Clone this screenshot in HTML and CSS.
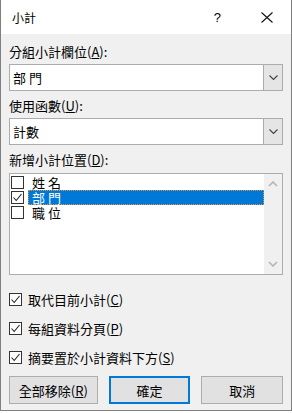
FILE: index.html
```html
<!DOCTYPE html>
<html lang="zh-Hant">
<head>
    <meta charset="UTF-8">
    <meta name="viewport" content="width=device-width, initial-scale=1.0">
    <title>小計</title>
    <link rel="stylesheet" href="styles.css">
</head>
<body>
    <div class="dialog">
        <div class="titlebar">
            <span class="title">小計</span>
            <span class="help">?</span>
            <svg class="close" width="12" height="11" viewBox="0 0 12 11">
                <path d="M0.5 0.5 L11.5 10.5 M11.5 0.5 L0.5 10.5" stroke="#111" stroke-width="1.1" fill="none"/>
            </svg>
        </div>

        <div class="content">
            <label class="field-label">分組小計欄位(<u>A</u>):</label>
            <div class="combo">
                <span class="combo-value">部 門</span>
                <span class="combo-btn">
                    <svg width="9" height="5" viewBox="0 0 9 5"><path d="M0.5 0.5 L4.5 4.5 L8.5 0.5" stroke="#444" stroke-width="1.1" fill="none"/></svg>
                </span>
            </div>

            <label class="field-label">使用函數(<u>U</u>):</label>
            <div class="combo">
                <span class="combo-value">計數</span>
                <span class="combo-btn">
                    <svg width="9" height="5" viewBox="0 0 9 5"><path d="M0.5 0.5 L4.5 4.5 L8.5 0.5" stroke="#444" stroke-width="1.1" fill="none"/></svg>
                </span>
            </div>

            <label class="field-label">新增小計位置(<u>D</u>):</label>
            <div class="listbox">
                <div class="list-items">
                    <div class="list-row">
                        <span class="box"></span>
                        <span class="row-text">姓 名</span>
                    </div>
                    <div class="list-row">
                        <span class="box">
                            <svg width="11" height="11" viewBox="0 0 11 11"><path d="M1.5 5.5 L4.2 8.5 L9.5 2" stroke="#222" stroke-width="1.1" fill="none"/></svg>
                        </span>
                        <span class="row-text selected">部 門</span>
                    </div>
                    <div class="list-row">
                        <span class="box"></span>
                        <span class="row-text">職 位</span>
                    </div>
                </div>
                <div class="scrollbar">
                    <svg width="10" height="6" viewBox="0 0 10 6"><path d="M1 5 L5 1 L9 5" stroke="#b4b4b4" stroke-width="1.6" fill="none"/></svg>
                    <svg width="10" height="6" viewBox="0 0 10 6"><path d="M1 1 L5 5 L9 1" stroke="#b4b4b4" stroke-width="1.6" fill="none"/></svg>
                </div>
            </div>

            <div class="options">
                <div class="option">
                    <span class="box">
                        <svg width="11" height="11" viewBox="0 0 11 11"><path d="M1.5 5.5 L4.2 8.5 L9.5 2" stroke="#222" stroke-width="1.1" fill="none"/></svg>
                    </span>
                    <span>取代目前小計(<u>C</u>)</span>
                </div>
                <div class="option">
                    <span class="box">
                        <svg width="11" height="11" viewBox="0 0 11 11"><path d="M1.5 5.5 L4.2 8.5 L9.5 2" stroke="#222" stroke-width="1.1" fill="none"/></svg>
                    </span>
                    <span>每組資料分頁(<u>P</u>)</span>
                </div>
                <div class="option">
                    <span class="box">
                        <svg width="11" height="11" viewBox="0 0 11 11"><path d="M1.5 5.5 L4.2 8.5 L9.5 2" stroke="#222" stroke-width="1.1" fill="none"/></svg>
                    </span>
                    <span>摘要置於小計資料下方(<u>S</u>)</span>
                </div>
            </div>

            <div class="buttons">
                <button class="btn btn-wide">全部移除(<u>R</u>)</button>
                <button class="btn btn-default">確定</button>
                <button class="btn">取消</button>
            </div>
        </div>
    </div>
</body>
</html>
```

FILE: styles.css
```css
html, body {
    margin: 0;
    padding: 0;
    background: #ffffff;
}
body {
    font-family: "Noto Sans CJK TC", "Noto Sans", sans-serif;
    font-size: 13px;
    color: #000;
}
.dialog {
    width: 292px;
    height: 411px;
    box-sizing: border-box;
    border: 1px solid #7f7f7f;
    border-top: none;
    background: #f0f0f0;
    display: flex;
    flex-direction: column;
}
.titlebar {
    height: 34px;
    background: #ffffff;
    display: flex;
    align-items: center;
    padding-left: 11px;
}
.title {
    font-size: 12px;
    flex: 1;
}
.help {
    font-family: "Liberation Sans", sans-serif;
    font-size: 13px;
    margin-right: 40px;
}
.close {
    margin-right: 18px;
}
.content {
    padding: 9px 8px 0 8px;
    display: flex;
    flex-direction: column;
}
.field-label {
    display: block;
    height: 18px;
    line-height: 18px;
    margin-bottom: 3px;
}
.combo {
    height: 27px;
    box-sizing: border-box;
    border: 1px solid #acacac;
    background: #fff;
    display: flex;
    margin-bottom: 6px;
}
.combo-value {
    flex: 1;
    line-height: 25px;
    padding-left: 3px;
}
.combo-btn {
    width: 18px;
    background: #e5e5e5;
    border-left: 1px solid #acacac;
    display: flex;
    align-items: center;
    justify-content: center;
}
.listbox {
    margin-top: 1px;
    height: 102px;
    box-sizing: border-box;
    border: 1px solid #adadad;
    background: #fff;
    display: flex;
}
.list-items {
    flex: 1;
    padding: 1px 0 0 1px;
}
.list-row {
    height: 15px;
    display: flex;
    align-items: center;
}
.box {
    width: 13px;
    height: 13px;
    box-sizing: border-box;
    border: 1px solid #333;
    background: #fff;
    display: flex;
    align-items: center;
    justify-content: center;
    flex-shrink: 0;
}
.row-text {
    flex: 1;
    height: 15px;
    line-height: 15px;
    padding-left: 4px;
    margin-left: 4px;
    box-sizing: border-box;
}
.row-text.selected {
    background: #0078d7;
    color: #fff;
    outline: 1px dotted #d89a4a;
    outline-offset: -1px;
}
.scrollbar {
    width: 18px;
    background: #f0f0f0;
    display: flex;
    flex-direction: column;
    justify-content: space-between;
    align-items: center;
    padding: 7px 0;
}
.options {
    margin-top: 10px;
    display: flex;
    flex-direction: column;
}
.option {
    height: 29px;
    display: flex;
    align-items: center;
    gap: 6px;
}
.buttons {
    margin-top: 4px;
    display: flex;
    gap: 11px;
}
.btn {
    font-family: inherit;
    font-size: 13px;
    height: 28px;
    width: 82px;
    padding: 0;
    background: #e1e1e1;
    border: 1px solid #adadad;
    color: #000;
}
.btn-wide {
    width: 89px;
}
.btn-default {
    border: 2px solid #0078d7;
}
```
